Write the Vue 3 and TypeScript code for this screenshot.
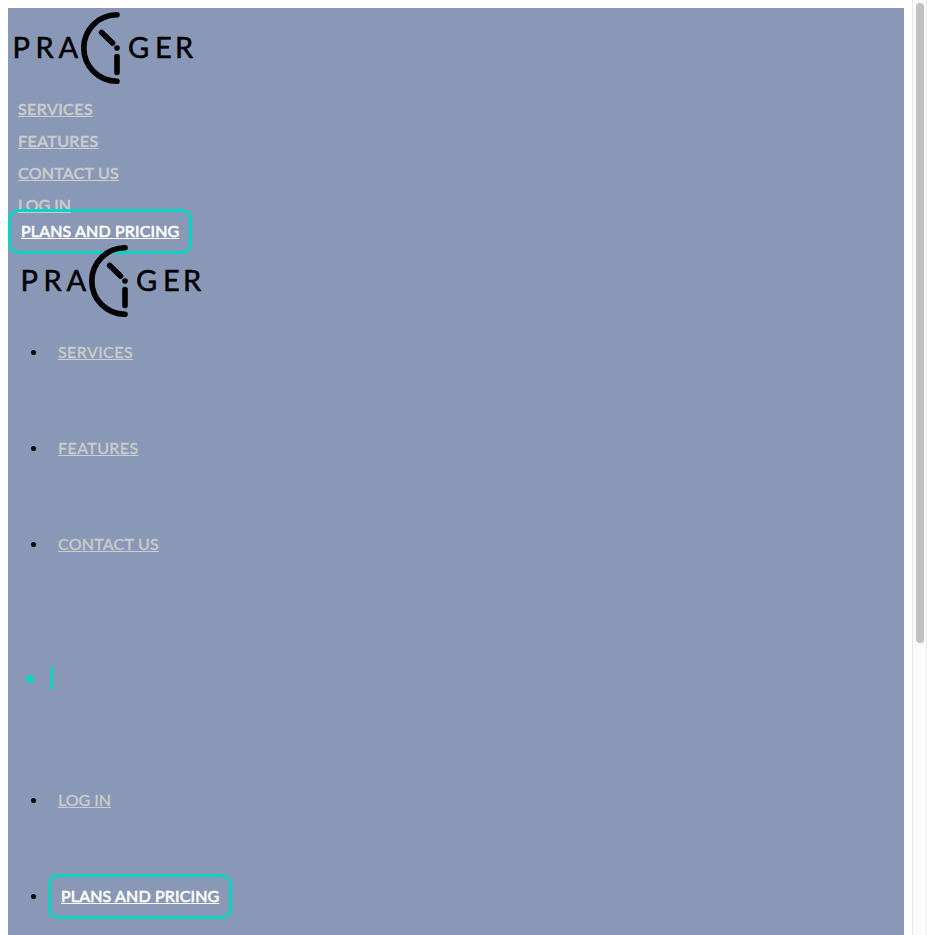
<script setup lang="ts">
import type { Directive } from 'vue'

interface NavItem {
  label: string
  width: number
}

const items: NavItem[] = [
  { label: 'SERVICES', width: 75 },
  { label: 'FEATURES', width: 80.6 },
  { label: 'CONTACT US', width: 101 },
  { label: 'LOG IN', width: 53 },
]
const menu = items.slice(0, 3)
const login = items[3]
const pricing: NavItem = { label: 'PLANS AND PRICING', width: 158.4 }

// Adjusts the tracking so that every label takes its nominal width.
const vTrack: Directive<HTMLElement, NavItem> = {
  mounted(el, { value }) {
    const natural = el.getBoundingClientRect().width
    el.style.letterSpacing = `${(value.width - natural) / value.label.length}px`
  },
}
</script>

<template>
  <div class="window">
    <main class="page">
      <header class="top">
        <svg class="logo" width="200" height="85" viewBox="0 0 200 85" role="img" aria-label="Pragiger">
          <g class="letters">
            <text x="4.5 27.5 50.5" y="50">PRA</text>
            <text x="120 147 167" y="50">GER</text>
          </g>
          <path class="arc" d="M109 6.8A33.2 33.2 0 0 0 109 73.2" />
          <path class="hand" d="M93.7 24.5L104.5 35M109 48.5V64.5" />
          <circle cx="109" cy="40" r="2.8" />
        </svg>
        <nav class="nav">
          <div v-for="item in items" :key="item.label" class="nav-row">
            <a v-track="item" class="link strong" href="#">{{ item.label }}</a>
          </div>
        </nav>
        <div class="button">
          <a v-track="pricing" class="link white" href="#">{{ pricing.label }}</a>
        </div>
      </header>

      <section class="drawer">
        <svg class="logo second" width="200" height="63" viewBox="0 0 200 63" role="img" aria-label="Pragiger">
          <g class="letters">
            <text x="4.5 27.5 50.5" y="50">PRA</text>
            <text x="120 147 167" y="50">GER</text>
          </g>
          <path class="arc" d="M109 6.8A33.2 33.2 0 0 0 109 73.2" />
          <path class="hand" d="M93.7 24.5L104.5 35M109 48.5V64.5" />
          <circle cx="109" cy="40" r="2.8" />
        </svg>
        <div class="list">
          <div v-for="item in menu" :key="item.label" class="row">
            <span class="bullet"></span>
            <a v-track="item" class="link indent" href="#">{{ item.label }}</a>
          </div>
          <div class="row divider">
            <span class="bullet big"></span>
            <span class="bar"></span>
          </div>
          <div class="row">
            <span class="bullet"></span>
            <a v-track="login" class="link indent" href="#">{{ login.label }}</a>
          </div>
          <div class="row">
            <span class="bullet"></span>
            <div class="button in-row">
              <a v-track="pricing" class="link white" href="#">{{ pricing.label }}</a>
            </div>
          </div>
        </div>
      </section>
    </main>
    <div class="scrollbar"><div class="thumb"></div></div>
  </div>
</template>

<style>
body {
  margin: 0;
  background: #fff;
}
</style>

<style scoped>
.window {
  display: flex;
  height: 935px;
  overflow: hidden;
  font-family: Lato, "Open Sans", sans-serif;
  font-size: 16px;
}
.page {
  flex: 1;
  margin: 8px 8px 0;
  background: #8998b6;
  overflow: hidden;
}
.logo {
  display: block;
  overflow: visible;
  fill: #000;
}
.second {
  margin: -13px 0 0 8px;
  position: relative;
}
.letters {
  font-size: 29px;
  font-weight: 400;
  stroke: #000;
  stroke-width: 0.5px;
}
.arc,
.hand {
  fill: none;
  stroke: #000;
  stroke-width: 5.6px;
  stroke-linecap: round;
}
.nav-row {
  height: 32px;
  line-height: 32px;
  padding-left: 10px;
}
.link {
  display: inline-block;
  white-space: nowrap;
  color: #ccc;
  text-decoration: underline;
  text-decoration-thickness: 1px;
  text-underline-offset: 1px;
  text-decoration-skip-ink: none;
  -webkit-text-stroke: 0.35px currentColor;
}
.strong {
  -webkit-text-stroke-width: 0.6px;
}
.white {
  color: #fff;
  -webkit-text-stroke-width: 0.6px;
}
.button {
  position: relative;
  box-sizing: border-box;
  width: 184px;
  height: 45px;
  margin-top: -12px;
  padding-left: 10px;
  border: 3px solid #0cd4c5;
  border-radius: 10px;
  line-height: 38px;
}
.in-row {
  margin: 0 0 0 12px;
}
.row {
  display: flex;
  align-items: center;
  height: 96px;
  padding-left: 23px;
}
.bullet {
  width: 5px;
  height: 5px;
  border-radius: 50%;
  background: #000;
}
.indent {
  margin: 0 0 2px 22px;
}
.divider {
  box-sizing: border-box;
  height: 160px;
  padding: 14px 0 0 18px;
}
.big {
  width: 8px;
  height: 8px;
  background: #0cd4c5;
}
.bar {
  width: 3px;
  height: 23px;
  margin: 0 0 1px 16px;
  background: #0cd4c5;
}
.scrollbar {
  box-sizing: border-box;
  width: 15px;
  padding: 3px 2px 0 3px;
  background: #fafafa;
  border-left: 1px solid #e8e8e8;
  border-right: 1px solid #ededed;
}
.thumb {
  width: 8px;
  height: 640px;
  border-radius: 4px;
  background: #c1c1c1;
}
</style>
